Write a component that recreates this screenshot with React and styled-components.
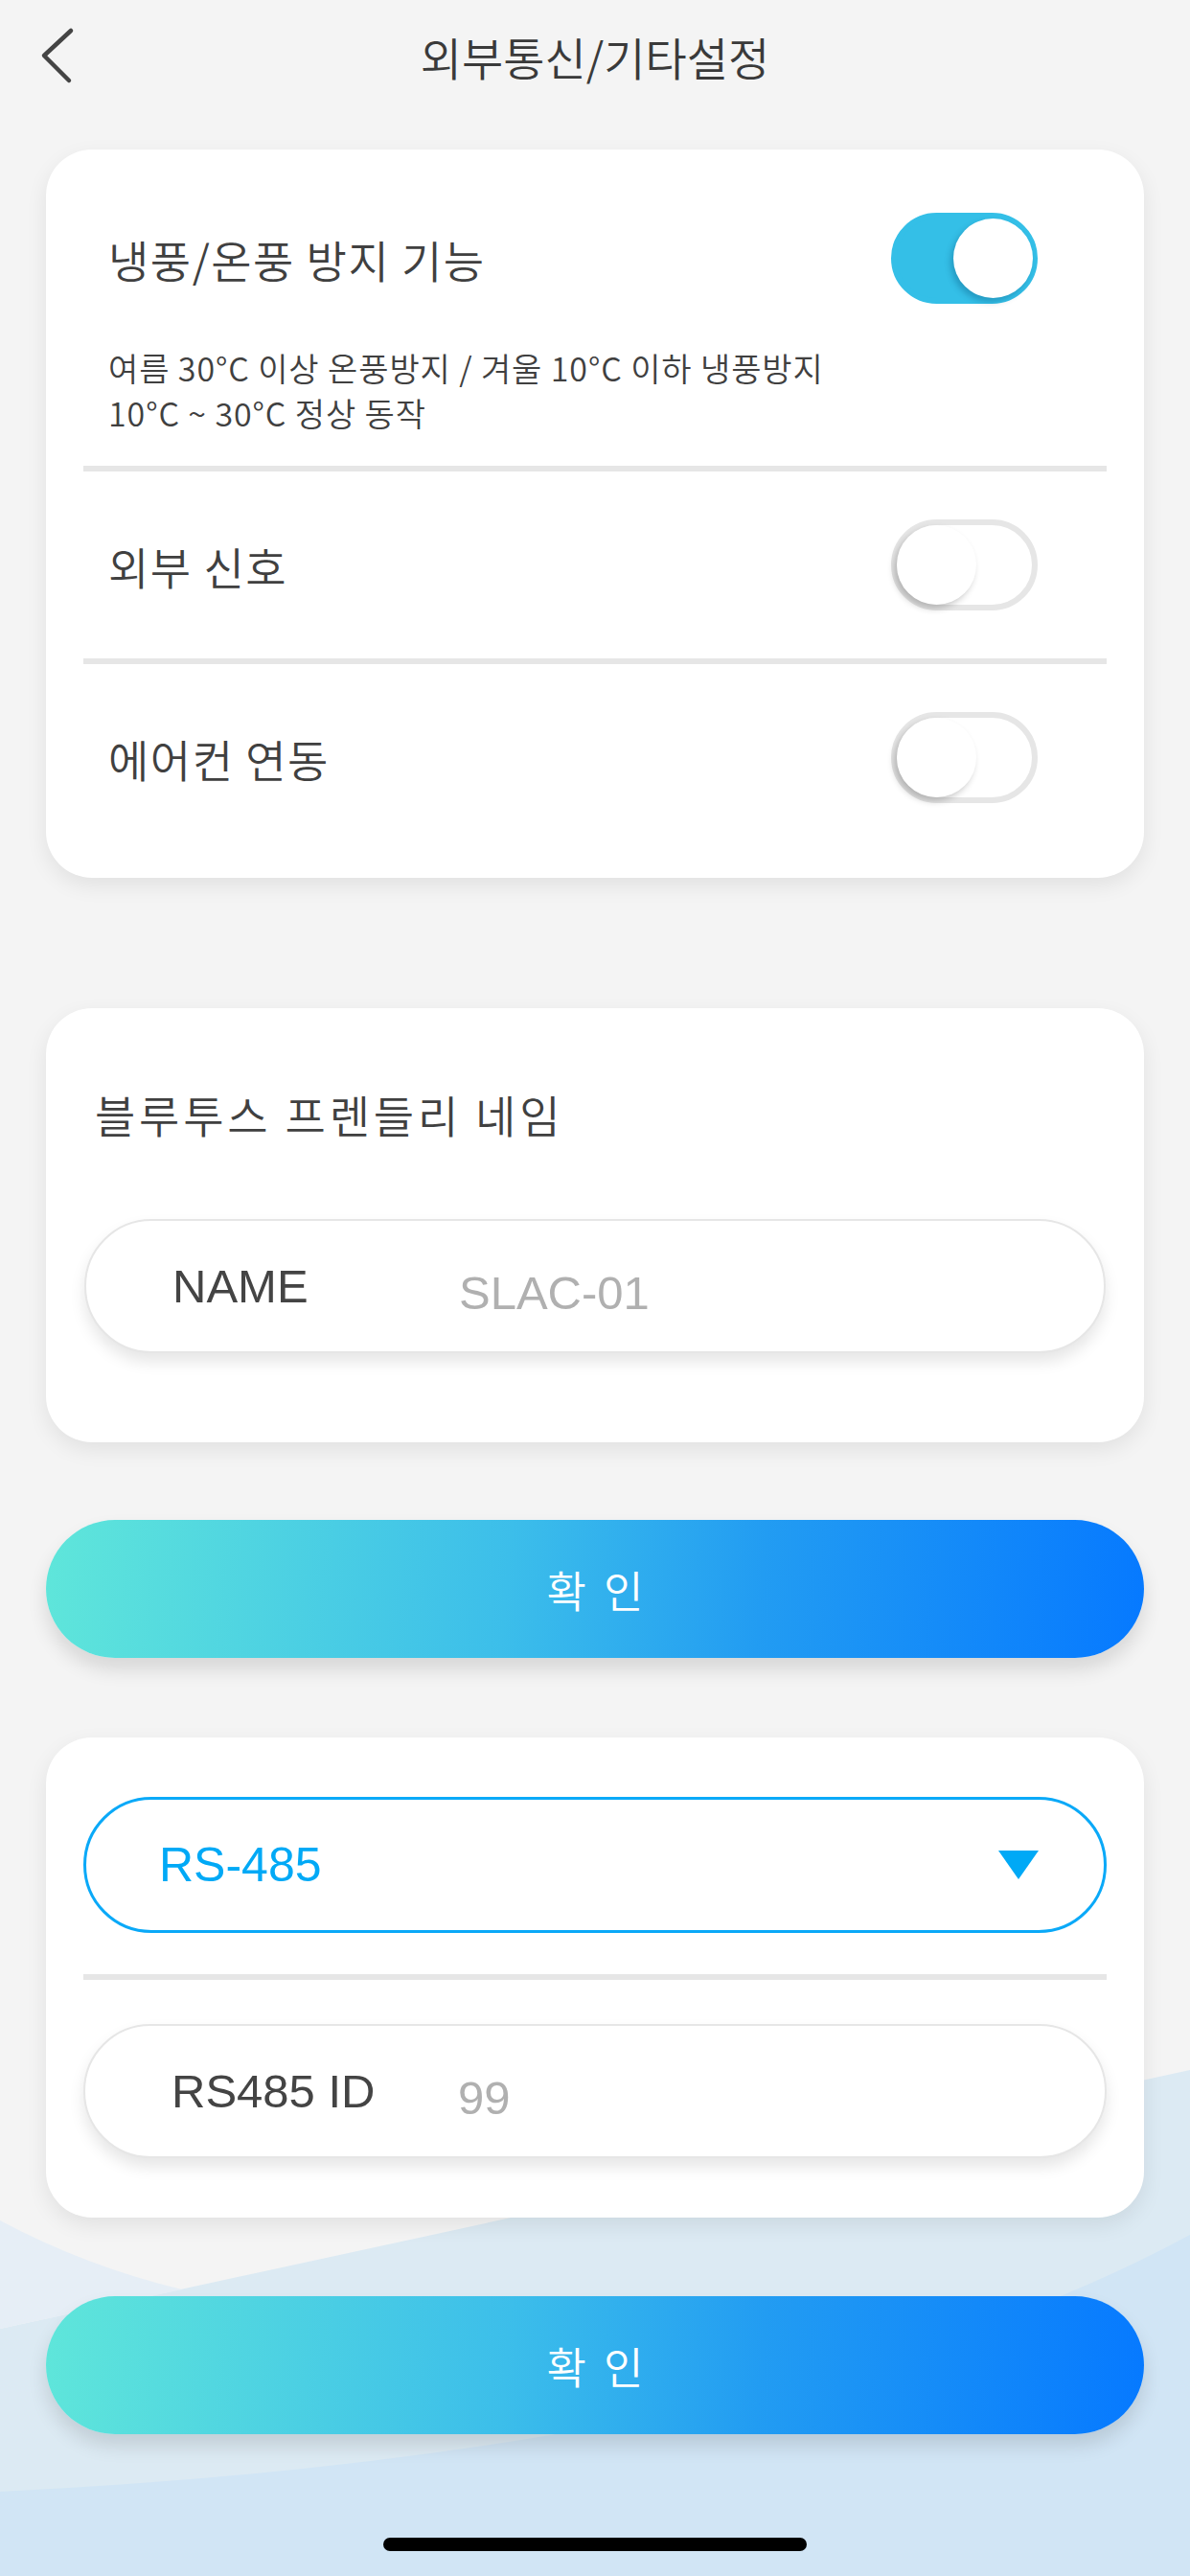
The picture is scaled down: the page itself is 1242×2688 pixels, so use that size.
import React from "react";
import styled, { createGlobalStyle } from "styled-components";

const GlobalStyle = createGlobalStyle`
  * {
    box-sizing: border-box;
  }
  body {
    margin: 0;
    background: #f4f4f4;
    font-family: "Noto Sans CJK KR", "Noto Sans", sans-serif;
    color: #3f3f3f;
  }
`;

const Page = styled.div`
  position: relative;
  width: 1242px;
  min-height: 2688px;
  overflow: hidden;
  display: flex;
  flex-direction: column;
  padding: 0 48px 25px;
`;

const Backdrop = styled.svg`
  position: absolute;
  left: 0;
  bottom: 0;
  width: 1242px;
  height: 688px;
  z-index: 0;
`;

const Layer = styled.div`
  position: relative;
  z-index: 1;
  display: flex;
  flex-direction: column;
`;

const Header = styled.header`
  display: grid;
  grid-template-columns: 1fr auto 1fr;
  align-items: center;
  height: 120px;
  margin: 0 -48px;
`;

const BackButton = styled.button`
  justify-self: start;
  display: flex;
  align-items: center;
  margin-left: 40px;
  margin-top: -4px;
  padding: 0;
  border: 0;
  background: none;
`;

const Title = styled.h1`
  margin: -4px 0 0;
  font-size: 47px;
  font-weight: 350;
  letter-spacing: 0;
  color: #3a3a3a;
`;

const Card = styled.section`
  background: #fff;
  border-radius: 48px;
  box-shadow: 0 8px 22px rgba(0, 0, 0, 0.08);
  padding: ${(p) => p.$pad};
  margin-top: ${(p) => p.$top}px;
  display: flex;
  flex-direction: column;
`;

const Row = styled.div`
  padding: 50px 72px ${(p) => (p.$bottom ? p.$bottom : 50)}px 26px;
`;

const RowHead = styled.div`
  display: flex;
  align-items: center;
  justify-content: space-between;
  height: 95px;
`;

const Label = styled.span`
  font-size: 46px;
  font-weight: 350;
  letter-spacing: 1.5px;
  color: #404040;
`;

const Desc = styled.p`
  margin: 43px 0 0;
  font-size: 34px;
  font-weight: 350;
  line-height: 47px;
  letter-spacing: 0.9px;
  color: #404040;
`;

const Divider = styled.hr`
  margin: 0;
  border: 0;
  height: 6px;
  background: #e6e6e6;
`;

const Track = styled.div`
  position: relative;
  width: 153px;
  height: 95px;
  border-radius: 48px;
  background: ${(p) => (p.$on ? "#34bfe7" : "#fff")};
  border: 6px solid ${(p) => (p.$on ? "#34bfe7" : "#e6e6e6")};
  flex-shrink: 0;
`;

const Knob = styled.div`
  position: absolute;
  top: 0;
  left: ${(p) => (p.$on ? "59px" : "0")};
  width: 83px;
  height: 83px;
  border-radius: 50%;
  background: #fff;
  box-shadow: ${(p) =>
    p.$on
      ? "-3px 4px 6px rgba(0, 70, 110, 0.3)"
      : "-3px 4px 7px rgba(0, 0, 0, 0.22)"};
`;

const SectionTitle = styled.h2`
  margin: 0 0 80px 11px;
  font-size: 46px;
  font-weight: 350;
  letter-spacing: 3.8px;
  line-height: 60px;
  color: #404040;
`;

const Pill = styled.div`
  display: flex;
  align-items: center;
  height: ${(p) => p.$h || 140}px;
  border-radius: 72px;
  background: #fff;
  border: ${(p) => (p.$accent ? "3px solid #0aa9f8" : "2px solid #e6e6e6")};
  box-shadow: ${(p) => (p.$accent ? "none" : "0 9px 16px rgba(0, 0, 0, 0.1)")};
  padding: ${(p) => (p.$accent ? "0 68px 0 76px" : "0 40px 0 90px")};
`;

const FieldLabel = styled.span`
  width: 299px;
  flex-shrink: 0;
  font-family: "Liberation Sans", Arial, sans-serif;
  font-size: 49px;
  color: #444;
`;

const FieldInput = styled.input`
  flex: 1;
  min-width: 0;
  margin-top: 14px;
  border: 0;
  outline: none;
  background: none;
  font-family: "Liberation Sans", Arial, sans-serif;
  font-size: 49px;
  color: #444;
  padding: 0;
  &::placeholder {
    color: #b0b0b0;
  }
`;

const SelectText = styled.span`
  flex: 1;
  font-family: "Liberation Sans", Arial, sans-serif;
  font-size: 50px;
  color: #00a9f6;
`;

const SelectDivider = styled(Divider)`
  margin: 43px 0 46px;
`;

const Confirm = styled.button`
  height: 144px;
  margin-top: ${(p) => p.$top}px;
  border: 0;
  border-radius: 72px;
  background: linear-gradient(95deg, #5fe6da 0%, #3cbeea 42%, #229cf2 65%, #0679ff 100%);
  box-shadow: 0 12px 20px rgba(0, 0, 0, 0.12);
  font-family: "Noto Sans CJK KR", sans-serif;
  font-size: 45px;
  font-weight: 350;
  letter-spacing: 4px;
  text-indent: 4px;
  color: #fff;
`;

const HomeBar = styled.div`
  align-self: center;
  width: 442px;
  height: 14px;
  margin-top: 108px;
  border-radius: 7px;
  background: #000;
`;

function Toggle({ on }) {
  return (
    <Track $on={on}>
      <Knob $on={on} />
    </Track>
  );
}

function SettingRow({ label, on, children, bottom }) {
  return (
    <Row $bottom={bottom}>
      <RowHead>
        <Label>{label}</Label>
        <Toggle on={on} />
      </RowHead>
      {children}
    </Row>
  );
}

export default function App() {
  return (
    <Page>
      <GlobalStyle />
      <Backdrop viewBox="0 2000 1242 688" preserveAspectRatio="none">
        <path d="M0 2430 L1242 2160 L1242 2688 L0 2688 Z" fill="#dceaf3" />
        <path d="M0 2317 Q90 2365 190 2389 L0 2430 Z" fill="#e6eef6" />
        <path d="M1242 2332 Q820 2560 0 2600 L0 2688 L1242 2688 Z" fill="#d1e5f5" />
      </Backdrop>
      <Layer>
        <Header>
          <BackButton aria-label="뒤로">
            <svg width="40" height="60" viewBox="0 0 40 60">
              <path
                d="M34 4 L6 30 L32 56"
                fill="none"
                stroke="#444"
                strokeWidth="4.5"
                strokeLinecap="round"
                strokeLinejoin="round"
              />
            </svg>
          </BackButton>
          <Title>외부통신/기타설정</Title>
          <span />
        </Header>

        <Card $top={36} $pad="16px 39px 28px">
          <SettingRow label="냉풍/온풍 방지 기능" on bottom={32}>
            <Desc>
              여름 30°C 이상 온풍방지 / 겨울 10°C 이하 냉풍방지
              <br />
              10°C ~ 30°C 정상 동작
            </Desc>
          </SettingRow>
          <Divider />
          <SettingRow label="외부 신호" on={false} />
          <Divider />
          <SettingRow label="에어컨 연동" on={false} />
        </Card>

        <Card $top={136} $pad="80px 40px 93px">
          <SectionTitle>블루투스 프렌들리 네임</SectionTitle>
          <Pill>
            <FieldLabel>NAME</FieldLabel>
            <FieldInput placeholder="SLAC-01" />
          </Pill>
        </Card>

        <Confirm $top={81}>확 인</Confirm>

        <Card $top={83} $pad="62px 39px 62px">
          <Pill $accent $h={142}>
            <SelectText>RS-485</SelectText>
            <svg width="42" height="30" viewBox="0 0 42 30">
              <path d="M0 0 H42 L21 30 Z" fill="#00a9f6" />
            </svg>
          </Pill>
          <SelectDivider />
          <Pill>
            <FieldLabel>RS485 ID</FieldLabel>
            <FieldInput placeholder="99" />
          </Pill>
        </Card>

        <Confirm $top={82}>확 인</Confirm>

        <HomeBar />
      </Layer>
    </Page>
  );
}
